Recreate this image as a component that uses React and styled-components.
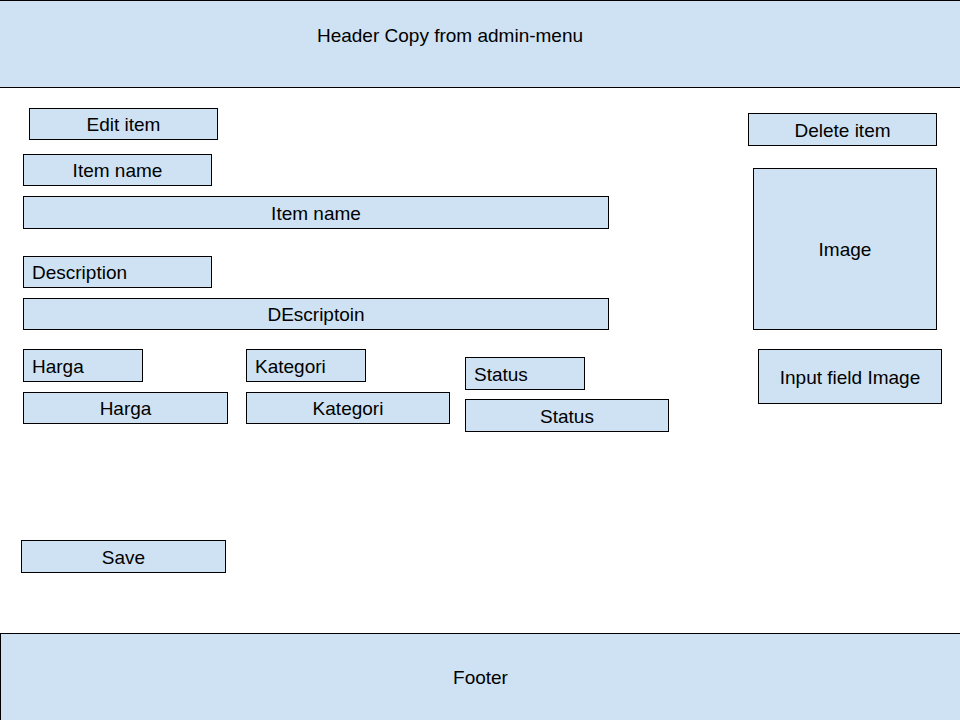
import React from "react";
import styled, { createGlobalStyle, css } from "styled-components";

const GlobalStyle = createGlobalStyle`
  *, *::before, *::after { box-sizing: border-box; }
  body { margin: 0; background: #ffffff; }
  body, button, input {
    font-family: "Liberation Sans", Arial, sans-serif;
    font-size: 19px;
    line-height: 24px;
    color: #000000;
  }
`;

const panel = css`
  background: #cfe2f3;
  border: 1px solid #000000;
  border-radius: 0;
`;

const bar = css`
  ${panel}
  display: flex;
  align-items: center;
  justify-content: center;
  height: ${(p) => (p.$tall ? "33px" : "32px")};
  margin: 0;
  padding: 2px 8px 0;
  font-weight: 400;
  white-space: nowrap;
`;

const Page = styled.div`
  display: flex;
  flex-direction: column;
  min-height: 100vh;
`;

const Header = styled.header`
  ${panel}
  border-width: 1px 0;
  min-height: 88px;
  padding: 23px 60px 0 0;
  text-align: center;
`;

const Title = styled.h1`
  margin: 0;
  font-size: inherit;
  font-weight: 400;
`;

const Main = styled.main`
  flex: 1;
  display: flex;
  align-items: flex-start;
  gap: 79px;
  padding: 20px 18px 60px 21px;
`;

const Form = styled.form`
  flex: 1;
  min-width: 0;
`;

const Heading = styled.h2`
  ${bar}
  width: 189px;
  margin: 0 0 14px 8px;
  font-size: inherit;
`;

const Fields = styled.div`
  padding-left: 2px;
`;

const Field = styled.div`
  display: flex;
  flex-direction: column;
  gap: 10px;
  margin: 0 60px ${(p) => p.$after} 0;
`;

const Label = styled.label`
  ${bar}
  width: ${(p) => (p.$short ? "120px" : "189px")};
  justify-content: ${(p) => (p.$centered ? "center" : "flex-start")};
`;

const TextInput = styled.input`
  ${bar}
  width: 100%;
  text-align: center;
`;

const Details = styled.div`
  display: grid;
  grid-template-columns: 223fr 219fr 204fr;
  align-items: start;
`;

const Detail = styled.div`
  display: flex;
  flex-direction: column;
  gap: ${(p) => p.$gap || "10px"};
  padding: ${(p) => p.$top || "0"} ${(p) => p.$right || "0"} 0 0;
`;

const SaveButton = styled.button`
  ${bar}
  width: 205px;
  margin-top: 108px;
  cursor: pointer;
`;

const Side = styled.aside`
  flex: 0 0 194px;
  display: flex;
  flex-direction: column;
  padding-top: 5px;
`;

const DeleteButton = styled.button`
  ${bar}
  margin: 0 5px 22px 0;
  cursor: pointer;
`;

const ImagePreview = styled.div`
  ${panel}
  display: flex;
  align-items: center;
  justify-content: center;
  height: 162px;
  margin: 0 0 19px 5px;
  margin-right: 5px;
  padding-top: 2px;
`;

const UploadButton = styled.button`
  ${bar}
  height: 55px;
  margin-left: 10px;
  cursor: pointer;
`;

const Footer = styled.footer`
  ${panel}
  border-width: 1px 0 0 1px;
  display: flex;
  align-items: center;
  justify-content: center;
  min-height: 87px;
  padding-top: 2px;
`;

export default function App() {
  return (
    <>
      <GlobalStyle />
      <Page>
        <Header>
          <Title>Header Copy from admin-menu</Title>
        </Header>
        <Main>
          <Form onSubmit={(e) => e.preventDefault()}>
            <Heading>Edit item</Heading>
            <Fields>
              <Field $after="27px">
                <Label htmlFor="name" $centered>Item name</Label>
                <TextInput id="name" defaultValue="Item name" $tall />
              </Field>
              <Field $after="19px">
                <Label htmlFor="description">Description</Label>
                <TextInput id="description" defaultValue="DEscriptoin" />
              </Field>
              <Details>
                <Detail $right="18px">
                  <Label htmlFor="harga" $short $tall>Harga</Label>
                  <TextInput id="harga" defaultValue="Harga" />
                </Detail>
                <Detail $right="15px">
                  <Label htmlFor="kategori" $short $tall>Kategori</Label>
                  <TextInput id="kategori" defaultValue="Kategori" />
                </Detail>
                <Detail $top="8px" $gap="9px">
                  <Label htmlFor="status" $short $tall>Status</Label>
                  <TextInput id="status" defaultValue="Status" $tall />
                </Detail>
              </Details>
            </Fields>
            <SaveButton type="submit" $tall>Save</SaveButton>
          </Form>
          <Side>
            <DeleteButton type="button" $tall>Delete item</DeleteButton>
            <ImagePreview>Image</ImagePreview>
            <UploadButton type="button">Input field Image</UploadButton>
          </Side>
        </Main>
        <Footer>Footer</Footer>
      </Page>
    </>
  );
}
